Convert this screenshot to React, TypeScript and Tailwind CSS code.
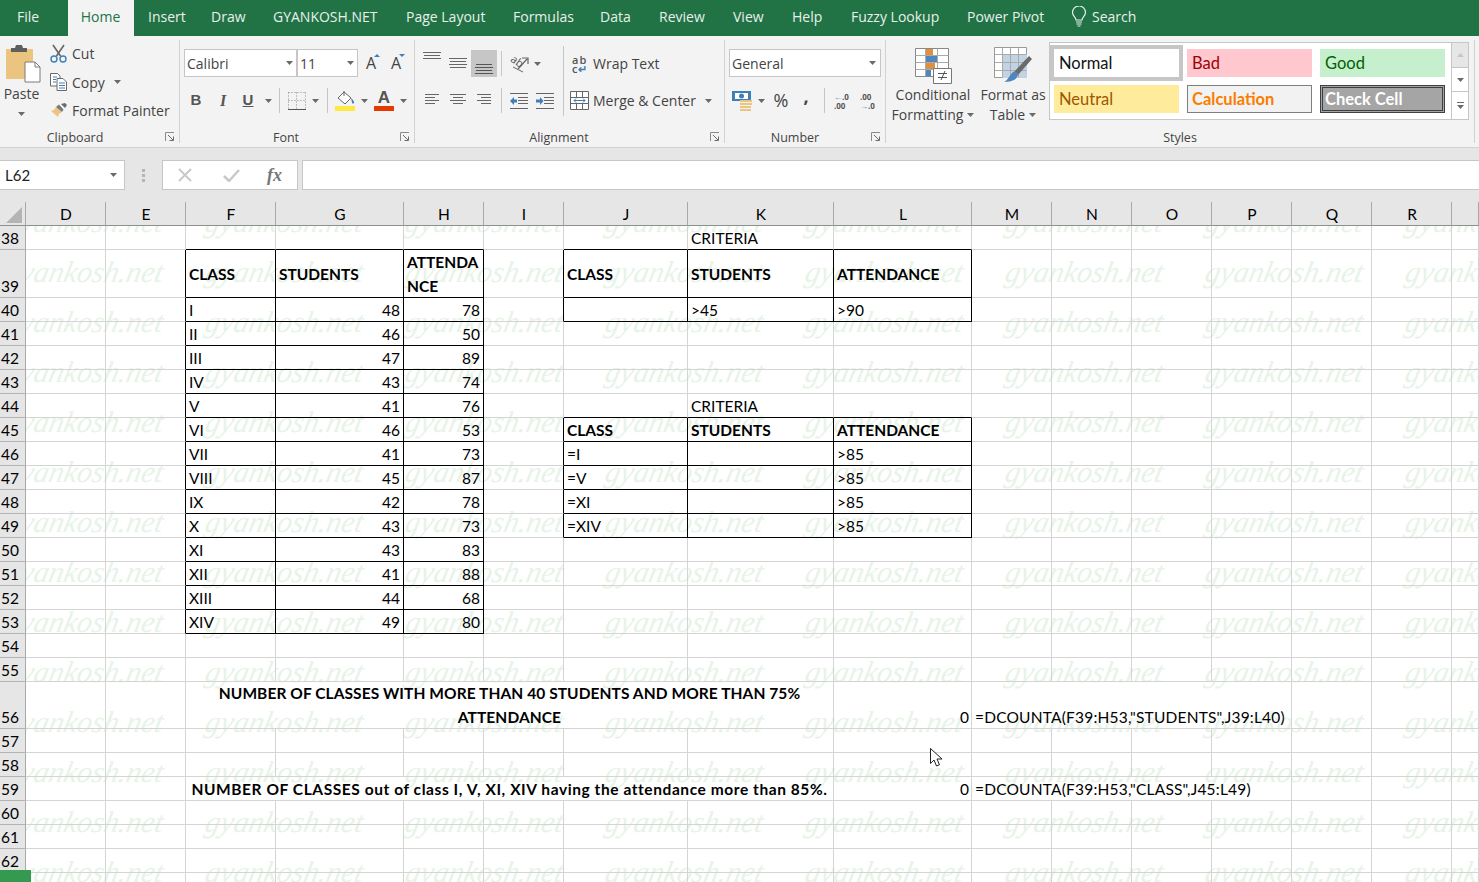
import React from "react";

const ui = "font-['Open_Sans',sans-serif]";

const Caret = ({ className = "" }: { className?: string }) => (
  <svg width="7" height="4" viewBox="0 0 7 4" className={"shrink-0 " + className}>
    <path d="M0 0h7L3.5 4z" fill="#6a6a6a" />
  </svg>
);
const Sep = ({ className = "" }: { className?: string }) => <div className={"w-px h-[25px] bg-[#c6c6c6] shrink-0 " + className} />;

const PasteIcon = () => (
  <svg width="36" height="40" viewBox="0 0 36 40" className="block">
    <path d="M1 6h27v30H1z" fill="#ebc57f" />
    <path d="M6 5h4l1-3h6l1 3h4v4H6z" fill="#5f5f5f" />
    <path d="M20 19h10l5 5v15H20z" fill="#fff" stroke="#7a7a7a" />
    <path d="M30 19v5h5" fill="none" stroke="#7a7a7a" />
  </svg>
);
const ScissorsIcon = () => (
  <svg width="17" height="19" viewBox="0 0 17 19" className="block">
    <path d="M3 1l7.5 11M14 1L6.5 12" stroke="#666" strokeWidth="1.6" fill="none" />
    <circle cx="4" cy="15" r="3" fill="none" stroke="#3f7fb8" strokeWidth="1.4" />
    <circle cx="13" cy="15" r="3" fill="none" stroke="#3f7fb8" strokeWidth="1.4" />
  </svg>
);
const CopyIcon = () => (
  <svg width="18" height="18" viewBox="0 0 18 18" className="block">
    <path d="M.5.5h7l2.5 2.5v10H.5z" fill="#fff" stroke="#6a6a6a" />
    <path d="M7 5.5h6l3.5 3.5v8.5H7z" fill="#fff" stroke="#6a6a6a" />
    <path d="M3 4h4M3 6.5h3M3 9h3M9 10h6M9 12.5h6M9 15h6" stroke="#3f7fb8" />
  </svg>
);
const BrushIcon = () => (
  <svg width="18" height="16" viewBox="0 0 18 16" className="block">
    <path d="M11 2l4 4 2-3-2-2z" fill="#6a6a6a" />
    <path d="M6 5l6 5-3 2-1 3-7-6 3-1z" fill="#ebc57f" />
    <path d="M6 5l3-2.5 4.5 5L12 10z" fill="#7a7a7a" />
  </svg>
);
const Launcher = () => (
  <svg width="10" height="10" viewBox="0 0 10 10" className="block">
    <path d="M.5 9V.5H9" fill="none" stroke="#8a8a8a" />
    <path d="M3 3l5 5M8.5 4.5v4h-4" fill="none" stroke="#6a6a6a" />
  </svg>
);
const Lines = ({ rows, color = "#666" }: { rows: [number, number, number][]; color?: string }) => (
  <svg width="18" height="27" viewBox="0 0 18 27" className="block shrink-0">
    {rows.map(([x1, x2, y], i) => (
      <path key={i} d={`M${x1} ${y + 0.5}H${x2}`} stroke={color} />
    ))}
  </svg>
);
const BordersIcon = () => (
  <svg width="18" height="18" viewBox="0 0 18 18" className="block">
    <path d="M.5.5h17M.5 8.5h17M.5.5v17M8.5.5v17M17.5.5v17" stroke="#888" strokeDasharray="1 2" fill="none" />
    <path d="M0 17.5h18" stroke="#555" />
  </svg>
);
const FillIcon = () => (
  <svg width="20" height="21" viewBox="0 0 20 21" className="block">
    <path d="M9 2l7 6-6 6-7-6z" fill="#fff" stroke="#666" />
    <path d="M9 1v5" stroke="#666" />
    <path d="M16 8c2 2 3 3 3 4.500s-2 1.500-2 0z" fill="#3f7fb8" />
    <path d="M0 16h20v5H0z" fill="#fde93f" />
  </svg>
);
const OrientIcon = () => (
  <svg width="19" height="20" viewBox="0 0 19 20" className="block">
    <path d="M3 13l10 5" stroke="#666" fill="none" />
    <path d="M8 15l9-10M12 4h6v6" stroke="#666" strokeWidth="1.200" fill="none" />
    <text x="0" y="10" fontSize="11" fill="#555" fontFamily="Open Sans" transform="rotate(35 5 8)">ab</text>
  </svg>
);
const IndentIcon = ({ flip }: { flip?: boolean }) => (
  <svg width="18" height="16" viewBox="0 0 18 16" className="block">
    <path d="M0 .5h18M0 15.500h18M8 4.500h10M8 7.500h10M8 10.500h10" stroke="#666" />
    {flip ? (
      <path d="M0 6.500h4V4l3.500 4L4 12V9.500H0z" fill="#3f7fb8" />
    ) : (
      <path d="M7 6.500H4V4L0 8l4 4V9.500h3z" fill="#3f7fb8" />
    )}
  </svg>
);
const MergeIcon = () => (
  <svg width="20" height="20" viewBox="0 0 20 20" className="block">
    <path d="M.5.5h18v18H.5zM.5 6.500h18M.5 12.500h18M6.500.5v6M12.500.5v6M6.500 12.500v6M12.500 12.500v6" fill="#fff" stroke="#666" />
    <path d="M1 7h17v5H1z" fill="#fff" />
    <path d="M4 9.500h11M4 9.500l2-2M4 9.500l2 2M15 9.500l-2-2M15 9.500l-2 2" stroke="#3f7fb8" fill="none" />
  </svg>
);
const CurrencyIcon = () => (
  <svg width="21" height="20" viewBox="0 0 21 20" className="block">
    <path d="M0 0h19v10H0z" fill="#3f7fb8" />
    <path d="M3 2h13v6H3z" fill="#fff" />
    <circle cx="9.500" cy="5" r="2.500" fill="#3f7fb8" />
    <path d="M8 9h12v2H8zM8 12h12v2H8zM8 15h11v2H8zM8 18h11v2H8z" fill="#ebc57f" />
  </svg>
);
const CFIcon = () => (
  <svg width="37" height="36" viewBox="0 0 37 36" className="block">
    <path d="M.5.5h33v28H.5z" fill="#fff" stroke="#888" />
    <path d="M.5 7.500h33M.5 14.500h33M.5 21.500h33M10.500.5v28M22.500.5v28" stroke="#aaa" />
    <path d="M11 1h7v6h-7zM11 15h9v6h-9z" fill="#df8f3f" />
    <path d="M11 8h11v6H11zM11 22h5v6h-5z" fill="#4f86c0" />
    <path d="M18.500 20.500h18v15h-18z" fill="#fff" stroke="#777" />
    <path d="M23 25.500h9M23 29.500h9M30 23l-4 9" stroke="#555" fill="none" />
  </svg>
);
const FTIcon = () => (
  <svg width="38" height="36" viewBox="0 0 38 36" className="block">
    <path d="M.5.5h32v30H.5z" fill="#fff" stroke="#999" />
    <path d="M8 7h25v24H8z" fill="#c2d4e3" />
    <path d="M.5 7.500h32M.5 15.500h32M.5 23.500h32M8.500.5v30M16.500.5v30M24.500.5v30" stroke="#aaa" />
    <path d="M35 9l3 3-14 16-4-3z" fill="#6a6a6a" />
    <path d="M19 25c3-1 5 1 5 3-1 4-5 7-14 7 4-2 5-6 9-10z" fill="#4f86c0" />
  </svg>
);

const Group = ({ w, label, lw, children, launcher = true }: { w: string; label: string; lw: string; children: React.ReactNode; launcher?: boolean }) => (
  <div className={"relative h-[103px] shrink-0 flex flex-col border-r border-[#d2d2d2] " + w}>
    <div className="h-[88px] shrink-0">{children}</div>
    <div className={"text-center text-[12.5px] leading-[18px] mt-[1px] text-[#444] " + lw}>{label}</div>
    {launcher && (
      <div className="absolute right-[4px] bottom-[1px]">
        <Launcher />
      </div>
    )}
  </div>
);

const tabs: [string, string][] = [
  ["File", "w-[68px] pl-[17px]"],
  ["Home", "w-[66px]"],
  ["Insert", "w-[63px] ml-[14px]"],
  ["Draw", "w-[62px]"],
  ["GYANKOSH.NET", "w-[133px]"],
  ["Page Layout", "w-[107px]"],
  ["Formulas", "w-[87px]"],
  ["Data", "w-[59px]"],
  ["Review", "w-[74px]"],
  ["View", "w-[59px]"],
  ["Help", "w-[59px]"],
  ["Fuzzy Lookup", "w-[116px]"],
  ["Power Pivot", "w-[105px]"],
];

const TabBar = () => (
  <div className={"h-[36px] bg-[#217346] flex items-center text-[14px] text-[#e8f0eb] " + ui}>
    {tabs.map(([t, c]) =>
      t === "Home" ? (
        <div key={t} className="h-[36px] w-[66px] bg-[#f3f3f3] text-[#217346] flex items-center justify-center shrink-0 pb-[3px] pr-[1px]">
          {t}
        </div>
      ) : (
        <div key={t} className={"shrink-0 whitespace-nowrap pb-[3px] " + c}>
          {t}
        </div>
      )
    )}
    <svg width="16" height="21" viewBox="0 0 16 21" className="shrink-0 ml-[-1px] mb-[3px]">
      <path d="M5 14c0-3-3.500-4-3.500-7.500a6.500 6.500 0 0 1 13 0C14.500 10 11 11 11 14z" fill="none" stroke="#e8f0eb" strokeWidth="1.200" />
      <path d="M5 16h6M5.500 18h5M6.500 20h3" stroke="#e8f0eb" />
    </svg>
    <span className="ml-[5px] pb-[3px]">Search</span>
  </div>
);

const Ribbon = () => (
  <div className={"h-[112px] bg-[#f3f3f3] border-b border-[#d2d2d2] pt-[4px] flex text-[#444] text-[14px] " + ui}>
    <Group w="w-[180px]" label="Clipboard" lw="w-[150px]">
      <div className="flex">
        <div className="w-[42px] shrink-0 flex flex-col items-center pt-[3px]">
          <div className="ml-[4px]">
            <PasteIcon />
          </div>
          <div className="mt-[2px] leading-[18px] ml-[1px]">Paste</div>
          <Caret className="mt-[9px] ml-[1px]" />
        </div>
        <div className="pl-[8px] pt-[1px] flex flex-col">
          <div className="flex items-center h-[24px] whitespace-nowrap"><div className="w-[22px]"><ScissorsIcon /></div>Cut</div>
          <div className="flex items-center h-[28px] mt-[3px] whitespace-nowrap"><div className="w-[22px]"><CopyIcon /></div>Copy<Caret className="ml-[9px]" /></div>
          <div className="flex items-center h-[28px] whitespace-nowrap"><div className="w-[22px]"><BrushIcon /></div>Format Painter</div>
        </div>
      </div>
    </Group>

    <Group w="w-[235px]" label="Font" lw="w-[212px]">
      <div className="pt-[9px] pl-[4px]">
        <div className="flex items-center h-[28px]">
          <div className="flex w-[174px] h-[28px] border border-[#c6c6c6] bg-white">
            <div className="w-[113px] border-r-2 border-[#c6c6c6] flex items-center justify-between pl-[2px] pr-[3px]">Calibri<Caret /></div>
            <div className="flex-1 flex items-center justify-between pl-[2px] pr-[3px]">11<Caret /></div>
          </div>
          <div className="relative w-[16px] ml-[5px] text-[16px] leading-[20px] text-center">A
            <svg width="6" height="3" viewBox="0 0 6 3" className="absolute right-[-1px] top-[1px]"><path d="M0 3h6L3 0z" fill="#3f7fb8" /></svg>
          </div>
          <div className="relative w-[16px] ml-[9px] text-[16px] leading-[20px] text-center">A
            <svg width="6" height="3" viewBox="0 0 6 3" className="absolute right-[-1px] top-[1px]"><path d="M0 0h6L3 3z" fill="#3f7fb8" /></svg>
          </div>
        </div>
        <div className="flex items-center h-[25px] mt-[11px]">
          <div className="w-[24px] text-center font-['Liberation_Sans'] font-bold text-[15px] text-[#555]">B</div>
          <div className="w-[24px] ml-[3px] text-center font-['Liberation_Serif'] italic font-bold text-[16px] text-[#555]">I</div>
          <div className="w-[24px] ml-[1px] text-center font-['Liberation_Sans'] font-bold underline text-[15px] text-[#555]">U</div>
          <Caret className="ml-[5px]" />
          <Sep className="ml-[7px]" />
          <div className="ml-[8px]"><BordersIcon /></div>
          <Caret className="ml-[6px]" />
          <Sep className="ml-[8px]" />
          <div className="ml-[7px]"><FillIcon /></div>
          <Caret className="ml-[6px]" />
          <div className="ml-[6px] w-[20px] flex flex-col items-center">
            <span className="font-['Liberation_Sans'] font-bold text-[#555] text-[17px] leading-[15px]">A</span>
            <div className="w-[20px] h-[5px] bg-[#e63b00] mt-[1px]" />
          </div>
          <Caret className="ml-[6px]" />
        </div>
      </div>
    </Group>

    <Group w="w-[310px]" label="Alignment" lw="w-[288px]">
      <div className="flex">
        <div className="w-[148px] shrink-0 pt-[10px] pl-[8px]">
          <div className="flex items-center h-[27px]">
            <Lines rows={[[0, 18, 2], [1, 17, 5], [0, 18, 8]]} />
            <div className="ml-[8px]"><Lines rows={[[0, 18, 8], [1, 17, 11], [0, 18, 14], [1, 17, 17]]} /></div>
            <div className="ml-[4px] w-[26px] h-[27px] bg-[#c6c6c6] flex justify-center shrink-0"><Lines rows={[[1, 17, 14], [0, 18, 17], [1, 17, 20], [0, 18, 23]]} color="#555" /></div>
            <Sep className="ml-[4px]" />
            <div className="ml-[8px]"><OrientIcon /></div>
            <Caret className="ml-[5px]" />
          </div>
          <div className="flex items-center h-[27px] mt-[10px]">
            <div className="ml-[2px]"><Lines rows={[[0, 14, 7], [0, 10, 10], [0, 14, 13], [0, 10, 16]]} /></div>
            <div className="ml-[7px]"><Lines rows={[[0, 16, 7], [3, 13, 10], [0, 16, 13], [3, 13, 16]]} /></div>
            <div className="ml-[9px]"><Lines rows={[[0, 14, 7], [4, 14, 10], [0, 14, 13], [4, 14, 16]]} /></div>
            <Sep className="ml-[6px]" />
            <div className="ml-[8px]"><IndentIcon /></div>
            <div className="ml-[8px]"><IndentIcon flip /></div>
          </div>
        </div>
        <div className="w-px h-[70px] mt-[6px] bg-[#c6c6c6] shrink-0" />
        <div className="pt-[10px] flex flex-col">
          <div className="flex items-center h-[27px] pl-[8px] whitespace-nowrap">
            <div className="w-[21px] text-[11px] font-semibold leading-[9px] tracking-[1px] text-[#555]">ab<br />c<span className="text-[#3f7fb8]">↵</span></div>
            Wrap Text
          </div>
          <div className="flex items-center h-[27px] mt-[10px] pl-[6px] whitespace-nowrap">
            <div className="w-[23px]"><MergeIcon /></div>
            Merge &amp; Center
            <Caret className="ml-[9px]" />
          </div>
        </div>
      </div>
    </Group>

    <Group w="w-[161px]" label="Number" lw="w-[140px]">
      <div className="pt-[9px] pl-[4px]">
        <div className="w-[152px] h-[28px] border border-[#c6c6c6] bg-white flex items-center justify-between pl-[2px] pr-[4px]">General<Caret /></div>
        <div className="flex items-center h-[25px] mt-[11px] pl-[3px]">
          <CurrencyIcon />
          <Caret className="ml-[5px]" />
          <span className="ml-[7px] w-[18px] text-[18px] text-center">%</span>
          <span className="ml-[11px] w-[10px] text-[18px] font-bold text-center leading-[16px] mt-[-10px]">,</span>
          <Sep className="ml-[13px]" />
          <div className="ml-[9px] w-[16px] text-[8px] leading-[9px] font-bold text-[#555]"><span className="text-[#3f7fb8]">←</span>.0<br />.00</div>
          <div className="ml-[10px] w-[16px] text-[8px] leading-[9px] font-bold text-[#555]">.00<br /><span className="text-[#3f7fb8]">→</span>.0</div>
        </div>
      </div>
    </Group>

    <Group w="w-[589px]" label="Styles" lw="w-full" launcher={false}>
      <div className="flex">
        <div className="ml-[5px] w-[84px] shrink-0 flex flex-col items-center pt-[8px] leading-[20px]">
          <CFIcon />
          <div className="mt-[1px]">Conditional</div>
          <div className="flex items-center">Formatting<Caret className="ml-[4px]" /></div>
        </div>
        <div className="ml-[2px] w-[72px] shrink-0 flex flex-col items-center pt-[7px] leading-[20px]">
          <FTIcon />
          <div className="mt-[2px]">Format as</div>
          <div className="flex items-center">Table<Caret className="ml-[4px]" /></div>
        </div>
        <div className="mt-[2px] w-[403px] h-[78px] border border-[#c6c6c6] bg-white pt-[2px] shrink-0 text-[16.5px] font-['Lato',sans-serif] leading-none">
          <div className="flex items-center h-[36px]">
            <div className="w-[133px] h-[36px] border-[4px] border-[#c6c6c6] flex items-center pl-[5px] text-[#111]">Normal</div>
            <div className="ml-[4px] w-[125px] h-[28px] bg-[#ffc7ce] text-[#9c0006] flex items-center pl-[5px]">Bad</div>
            <div className="ml-[8px] w-[125px] h-[28px] bg-[#c6efce] text-[#006100] flex items-center pl-[5px]">Good</div>
          </div>
          <div className="flex items-center h-[28px] mt-[4px]">
            <div className="ml-[4px] w-[125px] h-[28px] bg-[#ffeb9c] text-[#9c5700] flex items-center pl-[5px]">Neutral</div>
            <div className="ml-[8px] w-[125px] h-[28px] bg-[#f2f2f2] border border-[#7f7f7f] text-[#fa7d00] font-bold flex items-center pl-[4px]">Calculation</div>
            <div className="ml-[8px] w-[125px] h-[28px] bg-[#a5a5a5] border-[3px] border-double border-[#3f3f3f] text-white font-bold flex items-center pl-[2px]">Check Cell</div>
          </div>
        </div>
        <div className="mt-[2px] w-[18px] h-[78px] ml-[-1px] shrink-0 border border-[#c6c6c6] flex flex-col bg-white">
          <div className="h-[25px] bg-[#e6e6e6] border-b border-[#c6c6c6] flex items-center justify-center"><svg width="7" height="4" viewBox="0 0 7 4"><path d="M0 4h7L3.500 0z" fill="#c6c6c6" /></svg></div>
          <div className="h-[24px] border-b border-[#c6c6c6] flex items-center justify-center"><Caret /></div>
          <div className="flex-1 flex flex-col gap-[2px] items-center justify-center"><div className="w-[7px] h-px bg-[#6a6a6a]" /><Caret /></div>
        </div>
      </div>
    </Group>
  </div>
);

const FormulaBar = () => (
  <div className="h-[42px] bg-[#e6e6e6] flex pt-[12px] font-['Lato',sans-serif]">
    <div className="w-[125px] h-[30px] bg-white border border-[#c6c6c6] border-l-0 flex items-center justify-between pl-[5px] pr-[7px] text-[15px] text-[#222] shrink-0">L62<Caret /></div>
    <div className="w-[37px] flex flex-col items-center justify-center gap-[2px] shrink-0 pr-[1px]">
      <div className="w-[3px] h-[3px] bg-[#b5b5b5]" /><div className="w-[3px] h-[3px] bg-[#b5b5b5]" /><div className="w-[3px] h-[3px] bg-[#b5b5b5]" />
    </div>
    <div className="w-[136px] h-[30px] bg-white border border-[#c6c6c6] flex items-center shrink-0">
      <svg width="16" height="16" viewBox="0 0 16 16" className="ml-[14px]"><path d="M2 2l12 12M14 2L2 14" stroke="#c9c9c9" strokeWidth="2" /></svg>
      <svg width="18" height="14" viewBox="0 0 18 14" className="ml-[29px]"><path d="M2 8l5 5L17 2" stroke="#c9c9c9" strokeWidth="2.500" fill="none" /></svg>
      <span className="ml-[27px] font-['Liberation_Serif'] italic font-bold text-[18px] text-[#777]">fx</span>
    </div>
    <div className="ml-[4px] flex-1 h-[30px] bg-white border border-[#c6c6c6] border-r-0" />
  </div>
);

const cols: [string, string][] = [
  ["D", "w-[80px]"], ["E", "w-[80px]"], ["F", "w-[90px]"], ["G", "w-[128px]"], ["H", "w-[80px]"], ["I", "w-[80px]"],
  ["J", "w-[124px]"], ["K", "w-[146px]"], ["L", "w-[138px]"], ["M", "w-[80px]"], ["N", "w-[80px]"], ["O", "w-[80px]"],
  ["P", "w-[80px]"], ["Q", "w-[80px]"], ["R", "w-[80px]"], ["S", "w-[27px]"],
];
const idx = (c: string) => cols.findIndex((x) => x[0] === c);
const inT = (r: number, c: number) =>
  (r >= 39 && r <= 53 && c >= idx("F") && c <= idx("H")) ||
  (r >= 39 && r <= 40 && c >= idx("J") && c <= idx("L")) ||
  (r >= 45 && r <= 49 && c >= idx("J") && c <= idx("L"));

type Cell = { t: string; a?: "r" | "c"; b?: boolean };
const cells: Record<string, Cell> = {
  K38: { t: "CRITERIA" },
  K44: { t: "CRITERIA" },
  F39: { t: "CLASS", b: true }, G39: { t: "STUDENTS", b: true }, H39: { t: "ATTENDANCE", b: true },
  J39: { t: "CLASS", b: true }, K39: { t: "STUDENTS", b: true }, L39: { t: "ATTENDANCE", b: true },
  K40: { t: ">45" }, L40: { t: ">90" },
  J45: { t: "CLASS", b: true }, K45: { t: "STUDENTS", b: true }, L45: { t: "ATTENDANCE", b: true },
  J46: { t: "=I" }, J47: { t: "=V" }, J48: { t: "=XI" }, J49: { t: "=XIV" },
  L46: { t: ">85" }, L47: { t: ">85" }, L48: { t: ">85" }, L49: { t: ">85" },
};
const data: [string, number, number][] = [
  ["I", 48, 78], ["II", 46, 50], ["III", 47, 89], ["IV", 43, 74], ["V", 41, 76], ["VI", 46, 53], ["VII", 41, 73],
  ["VIII", 45, 87], ["IX", 42, 78], ["X", 43, 73], ["XI", 43, 83], ["XII", 41, 88], ["XIII", 44, 68], ["XIV", 49, 80],
];
data.forEach(([a, b, c], i) => {
  const r = 40 + i;
  cells["F" + r] = { t: a };
  cells["G" + r] = { t: String(b), a: "r" };
  cells["H" + r] = { t: String(c), a: "r" };
});

const GridCell = ({ r, c }: { r: number; c: number }) => {
  const [name, w] = cols[c];
  const cell = cells[name + r];
  const blackR = inT(r, c) || inT(r, c + 1);
  const blackB = inT(r, c) || inT(r + 1, c);
  const center = r === 39 && cell;
  return (
    <div
      className={
        "shrink-0 h-full border-r border-b flex pl-[3px] pr-[3px] text-black whitespace-nowrap overflow-hidden " +
        w + " " +
        (blackR ? "border-r-black " : "border-r-[#d4d4d4] ") +
        (blackB ? "border-b-black " : "border-b-[#d4d4d4] ") +
        (center ? "items-center pt-[1px] " : "items-end ") +
        (cell?.a === "r" ? "justify-end " : "") +
        (cell?.b ? "font-bold" : "")
      }
    >
      {name === "H" && r === 39 ? (
        <span className="whitespace-normal break-all leading-[24px]">ATTENDA<br />NCE</span>
      ) : (
        <span>{cell?.t}</span>
      )}
    </div>
  );
};

const Row = ({ r }: { r: number }) => {
  const h = r === 39 ? "h-[48px]" : r === 56 ? "h-[47px]" : "h-[24px]";
  let content: React.ReactNode;
  if (r === 56 || r === 59) {
    const merged = "w-[648px] shrink-0 h-full border-r border-b border-[#d4d4d4] flex items-end justify-center text-center font-bold text-black";
    content = (
      <>
        <GridCell r={r} c={0} />
        <GridCell r={r} c={1} />
        <div className={merged}>
          {r === 56 ? (
            <span className="leading-[24px] tracking-[0.08px] relative top-[1px]">NUMBER OF CLASSES WITH MORE THAN 40 STUDENTS AND MORE THAN 75%<br />ATTENDANCE</span>
          ) : (
            <span className="whitespace-nowrap tracking-[0.57px]">NUMBER OF CLASSES out of class I, V, XI, XIV having the attendance more than 85%.</span>
          )}
        </div>
        <div className="w-[138px] shrink-0 h-full border-r border-b border-[#d4d4d4] flex items-end justify-end pr-[2px] text-black">0</div>
        <div className="w-[320px] shrink-0 h-full border-r border-b border-[#d4d4d4] flex items-end pl-[3px] text-black whitespace-nowrap tracking-[0.2px]">
          {r === 56 ? '=DCOUNTA(F39:H53,"STUDENTS",J39:L40)' : '=DCOUNTA(F39:H53,"CLASS",J45:L49)'}
        </div>
        <GridCell r={r} c={13} />
        <GridCell r={r} c={14} />
        <GridCell r={r} c={15} />
      </>
    );
  } else {
    content = cols.map((_, c) => <GridCell key={c} r={r} c={c} />);
  }
  return (
    <div className={"flex shrink-0 " + h}>
      <div className="w-[26px] shrink-0 h-full bg-[#e6e6e6] border-r border-r-[#a8a8a8] border-b border-b-[#b4b4b4] flex items-end text-black overflow-hidden pl-[1px]">
        {r < 63 ? r : ""}
      </div>
      {content}
    </div>
  );
};

const rows = Array.from({ length: 26 }, (_, i) => 38 + i);
const marks = Array.from({ length: 112 }, (_, i) => i);

const Sheet = () => (
  <div className="relative flex-1 min-h-0 overflow-hidden text-[15.500px] leading-[21px] font-['Lato',sans-serif] bg-white">
    <div className="h-[36px] bg-[#e6e6e6] flex items-end">
      <div className="w-[26px] h-[24px] shrink-0 border-r border-r-[#a8a8a8] border-b border-b-[#8f8f8f] flex items-start">
        <svg width="16" height="16" viewBox="0 0 16 16" className="ml-[6px] mt-[5px]"><path d="M16 0v16H0z" fill="#b4b4b4" /></svg>
      </div>
      {cols.map(([n, w]) => (
        <div key={n} className={"shrink-0 h-[24px] border-r border-r-[#a8a8a8] border-b border-b-[#8f8f8f] flex items-center justify-center text-black pt-[1px] pl-[1px] " + w}>
          {n === "S" ? "" : n}
        </div>
      ))}
    </div>
    <div className="relative">
      <div className="absolute inset-0 overflow-hidden">
        <div className="flex flex-wrap w-[1600px] mt-[-29px] ml-[6px]">
          {marks.map((i) => (
            <div key={i} className="w-[200px] h-[50px] shrink-0 font-['Liberation_Serif',serif] italic text-[30px] leading-[50px] text-[#e8f3e8] whitespace-nowrap">
              <span className="inline-block -skew-x-12">gyankosh.net</span>
            </div>
          ))}
        </div>
      </div>
      <div className="relative flex flex-col">
        {rows.map((r) => (
          <Row key={r} r={r} />
        ))}
      </div>
    </div>
    <div className="absolute left-0 bottom-0 w-[31px] h-[12px] bg-[#339a4f]" />
    <svg width="14" height="20" viewBox="0 0 14 20" className="absolute left-[930px] top-[558px]">
      <path d="M.5.5v15l3.500-3.500 2.500 6 3-1.200-2.500-5.800h5z" fill="#fff" stroke="#222" />
    </svg>
  </div>
);

export default function App() {
  return (
    <div className="w-[1479px] h-[882px] overflow-hidden flex flex-col bg-white">
      <TabBar />
      <Ribbon />
      <FormulaBar />
      <Sheet />
    </div>
  );
}
